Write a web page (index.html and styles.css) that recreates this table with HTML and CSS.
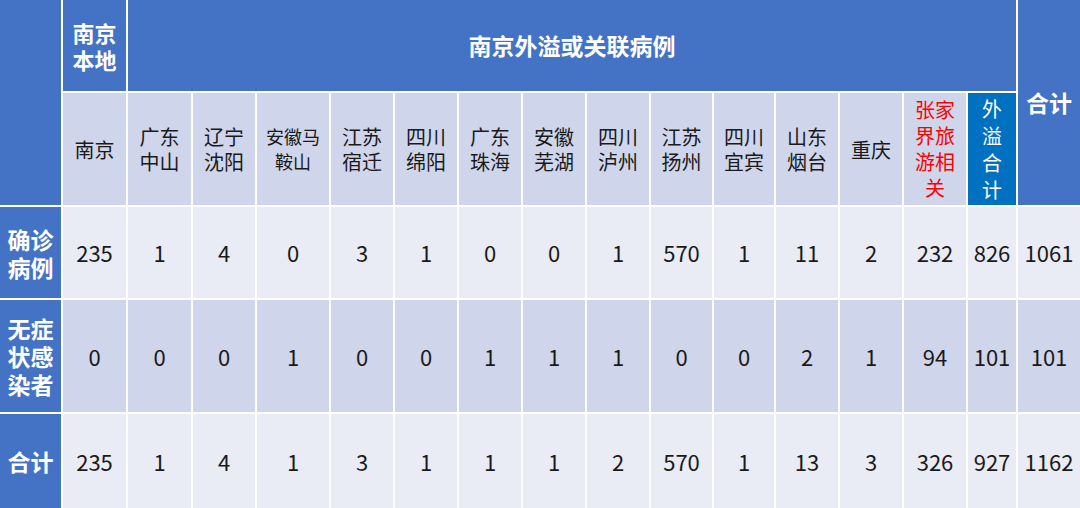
FILE: index.html
```html
<!DOCTYPE html>
<html lang="zh-CN">
<head>
<meta charset="utf-8">
<title>南京外溢或关联病例</title>
<link rel="stylesheet" href="styles.css">
</head>
<body>
<div class="table">
  <div class="cell hd span-rows"></div>
  <div class="cell hd title-local">南京<br>本地</div>
  <div class="cell hd title-main">南京外溢或关联病例</div>
  <div class="cell hd span-rows title-total">合计</div>

  <div class="cell sub">南京</div>
  <div class="cell sub">广东<br>中山</div>
  <div class="cell sub">辽宁<br>沈阳</div>
  <div class="cell sub sub-small">安徽马<br>鞍山</div>
  <div class="cell sub">江苏<br>宿迁</div>
  <div class="cell sub">四川<br>绵阳</div>
  <div class="cell sub">广东<br>珠海</div>
  <div class="cell sub">安徽<br>芜湖</div>
  <div class="cell sub">四川<br>泸州</div>
  <div class="cell sub">江苏<br>扬州</div>
  <div class="cell sub">四川<br>宜宾</div>
  <div class="cell sub">山东<br>烟台</div>
  <div class="cell sub">重庆</div>
  <div class="cell sub sub-red">张家<br>界旅<br>游相<br>关</div>
  <div class="cell sub sub-total">外<br>溢<br>合<br>计</div>

  <div class="cell hd row-head">确诊<br>病例</div>
  <div class="cell light">235</div>
  <div class="cell light">1</div>
  <div class="cell light">4</div>
  <div class="cell light">0</div>
  <div class="cell light">3</div>
  <div class="cell light">1</div>
  <div class="cell light">0</div>
  <div class="cell light">0</div>
  <div class="cell light">1</div>
  <div class="cell light">570</div>
  <div class="cell light">1</div>
  <div class="cell light">11</div>
  <div class="cell light">2</div>
  <div class="cell light">232</div>
  <div class="cell light">826</div>
  <div class="cell light">1061</div>

  <div class="cell hd row-head">无症<br>状感<br>染者</div>
  <div class="cell mid">0</div>
  <div class="cell mid">0</div>
  <div class="cell mid">0</div>
  <div class="cell mid">1</div>
  <div class="cell mid">0</div>
  <div class="cell mid">0</div>
  <div class="cell mid">1</div>
  <div class="cell mid">1</div>
  <div class="cell mid">1</div>
  <div class="cell mid">0</div>
  <div class="cell mid">0</div>
  <div class="cell mid">2</div>
  <div class="cell mid">1</div>
  <div class="cell mid">94</div>
  <div class="cell mid">101</div>
  <div class="cell mid">101</div>

  <div class="cell hd row-head">合计</div>
  <div class="cell light">235</div>
  <div class="cell light">1</div>
  <div class="cell light">4</div>
  <div class="cell light">1</div>
  <div class="cell light">3</div>
  <div class="cell light">1</div>
  <div class="cell light">1</div>
  <div class="cell light">1</div>
  <div class="cell light">2</div>
  <div class="cell light">570</div>
  <div class="cell light">1</div>
  <div class="cell light">13</div>
  <div class="cell light">3</div>
  <div class="cell light">326</div>
  <div class="cell light">927</div>
  <div class="cell light">1162</div>
</div>
</body>
</html>
```

FILE: styles.css
```css
html, body {
  margin: 0;
  padding: 0;
  background: #ffffff;
  overflow: hidden;
}

.table {
  width: 1080px;
  height: 508px;
  display: grid;
  grid-template-columns: 61px 63px 63px 62px 72px 62px 62px 62px 62px 62px 61px 60px 62px 62px 62px 48px 62px;
  grid-template-rows: 91px 112px 91px 112px 94px;
  gap: 2px;
  background: #ffffff;
  font-family: "Noto Sans CJK SC", "Noto Sans", sans-serif;
  color: #1a1a1a;
}

.cell {
  display: flex;
  align-items: center;
  justify-content: center;
  text-align: center;
  overflow: hidden;
  font-size: 22px;
  line-height: 27px;
}

.span-rows {
  grid-row: span 2;
}

.hd {
  background: #4472c4;
  color: #ffffff;
  font-weight: 700;
}

.title-local {
  font-size: 22px;
  line-height: 27px;
}

.title-main {
  grid-column: span 14;
  font-size: 23px;
}

.title-total {
  font-size: 23px;
}

.row-head {
  font-size: 23px;
  line-height: 28px;
}

.sub {
  background: #cfd5ea;
  font-size: 20px;
  line-height: 25px;
  color: #1a1a1a;
}

.sub-small {
  font-size: 18px;
}

.sub-red {
  color: #ff0000;
  line-height: 26px;
}

.sub-total {
  background: #0070c0;
  color: #ffffff;
  line-height: 27px;
}

.light {
  background: #e9ebf5;
}

.mid {
  background: #cfd5ea;
}
```
